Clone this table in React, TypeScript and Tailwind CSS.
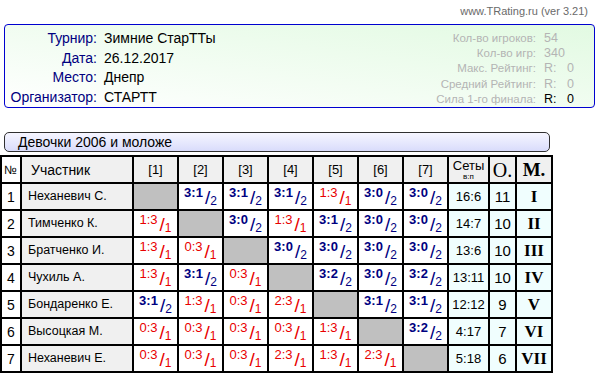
import {Fragment} from "react";

type Cell = string | null;

const rows: {name: string; games: Cell[]; sets: string; pts: string; place: string}[] = [
    {name: "Неханевич С.", games: [null, "3:1/2", "3:1/2", "3:1/2", "1:3/1", "3:0/2", "3:0/2"], sets: "16:6", pts: "11", place: "I"},
    {name: "Тимченко К.", games: ["1:3/1", null, "3:0/2", "1:3/1", "3:1/2", "3:0/2", "3:0/2"], sets: "14:7", pts: "10", place: "II"},
    {name: "Братченко И.", games: ["1:3/1", "0:3/1", null, "3:0/2", "3:0/2", "3:0/2", "3:0/2"], sets: "13:6", pts: "10", place: "III"},
    {name: "Чухиль А.", games: ["1:3/1", "3:1/2", "0:3/1", null, "3:2/2", "3:0/2", "3:2/2"], sets: "13:11", pts: "10", place: "IV"},
    {name: "Бондаренко Е.", games: ["3:1/2", "1:3/1", "0:3/1", "2:3/1", null, "3:1/2", "3:1/2"], sets: "12:12", pts: "9", place: "V"},
    {name: "Высоцкая М.", games: ["0:3/1", "0:3/1", "0:3/1", "0:3/1", "1:3/1", null, "3:2/2"], sets: "4:17", pts: "7", place: "VI"},
    {name: "Неханевич Е.", games: ["0:3/1", "0:3/1", "0:3/1", "2:3/1", "1:3/1", "2:3/1", null], sets: "5:18", pts: "6", place: "VII"},
]

const info = [
    ["Турнир:", "Зимние СтарТТы"],
    ["Дата:", "26.12.2017"],
    ["Место:", "Днепр"],
    ["Организатор:", "СТАРТТ"],
]

const stats = [
    ["Кол-во игроков:", "54", false],
    ["Кол-во игр:", "340", false],
    ["Макс. Рейтинг:", "R:   0", false],
    ["Средний Рейтинг:", "R:   0", false],
    ["Сила 1-го финала:", "R:   0", true],
] as const

function Score({value}: {value: string}) {
    const [score, pts] = value.split("/");
    const win = pts === "2";
    return (
        <span className={"inline-flex h-[21px] items-start " + (win ? "font-bold text-[#000080]" : "text-[#e80000]")}>
            <span className="text-[13px] leading-[13px]">{score}</span>
            <span className="text-[19px] leading-[18px] font-normal mt-[3px] ml-[2px]">/</span>
            <span className="text-[12px] leading-[12px] font-normal self-end">{pts}</span>
        </span>
    )
}

const td = "border border-black p-0 h-[27px] leading-none";

export default function App() {
    return (
        <div className="w-[600px] h-[373px] overflow-hidden bg-white font-['Liberation_Sans',sans-serif] text-black">
            <div className="h-[24px] pr-[12px] pt-[4px] text-right text-[11px] leading-[14px] text-[#6a6a6a]">
                www.TRating.ru (ver 3.21)
            </div>

            <div className="ml-[4px] mr-[5px] h-[84px] rounded-[4px] border border-[#0000d0] bg-linear-to-bl from-[#e2fae2] to-white flex justify-between">
                <div className="grid grid-cols-[92px_auto] gap-x-[7px] pt-[4px] text-[14px] leading-[19.5px]">
                    {info.map(([label, value]) => (
                        <Fragment key={label}>
                            <div className="text-right text-[#000080]">{label}</div>
                            <div>{value}</div>
                        </Fragment>
                    ))}
                </div>
                <div className="grid grid-cols-[auto_46px] gap-x-[8px] pt-[6px] pr-[4px] text-[11.5px] leading-[14.8px] text-[#b4b4b4]">
                    {stats.map(([label, value, dark]) => (
                        <Fragment key={label}>
                            <div className="text-right">{label}</div>
                            <div className={"whitespace-pre text-[12.5px] " + (dark ? "text-black" : "")}>{value}</div>
                        </Fragment>
                    ))}
                </div>
            </div>

            <div className="mt-[24px] ml-[4px] w-[546px] h-[20px] rounded-[5px] border border-[#303030] bg-linear-to-b from-[#f6f6ff] to-[#d9dcfb] pl-[13px] text-[14px] leading-[18px]">
                Девочки 2006 и моложе
            </div>

            <table className="mt-[3px] w-[553px] table-fixed border-separate border-spacing-0 border border-black text-[12px]">
                <colgroup>
                    <col className="w-[20px]"/>
                    <col className="w-[112px]"/>
                    {[1, 2, 3, 4, 5, 6, 7].map(n => <col key={n} className="w-[45px]"/>)}
                    <col className="w-[41px]"/>
                    <col className="w-[27px]"/>
                    <col className="w-[36px]"/>
                </colgroup>
                <thead>
                    <tr>
                        <td className={td + " text-[12px] pl-[2px] bg-white"}>№</td>
                        <td className={td + " bg-[#f0f0f0] text-[14px] pl-[9px]"}>Участник</td>
                        {[1, 2, 3, 4, 5, 6, 7].map(n => (
                            <td key={n} className={td + " bg-[#f0f0f0] text-center text-[13px]"}>[{n}]</td>
                        ))}
                        <td className={td + " bg-[#f0f0f0] text-center"}>
                            <div className="text-[13px] leading-[13px]">Сеты</div>
                            <div className="text-[8px] leading-[9px]">в:п</div>
                        </td>
                        <td className={td + " bg-[#f0f0f0] text-center font-['Liberation_Serif',serif] text-[20px]"}>О.</td>
                        <td className={td + " bg-[#f0f0f0] text-center font-['Liberation_Serif',serif] font-bold text-[19px]"}>М.</td>
                    </tr>
                </thead>
                <tbody>
                    {rows.map((row, i) => (
                        <tr key={row.name}>
                            <td className={td + " text-center text-[14px]"}>{i + 1}</td>
                            <td className={td + " bg-[#f0f0f0] pl-[6px] text-[12.5px]"}>{row.name}</td>
                            {row.games.map((g, j) => (
                                <td key={j} className={td + " text-center whitespace-nowrap " + (g ? "bg-white" : "bg-[#c0c0c0]")}>
                                    {g && <Score value={g}/>}
                                </td>
                            ))}
                            <td className={td + " bg-[#f0fefe] text-center text-[13px]"}>{row.sets}</td>
                            <td className={td + " bg-[#f0fefe] text-center text-[15px]"}>{row.pts}</td>
                            <td className={td + " bg-[#f0fefe] text-center font-['Liberation_Serif',serif] font-bold text-[17px]"}>{row.place}</td>
                        </tr>
                    ))}
                </tbody>
            </table>
        </div>
    )
}
